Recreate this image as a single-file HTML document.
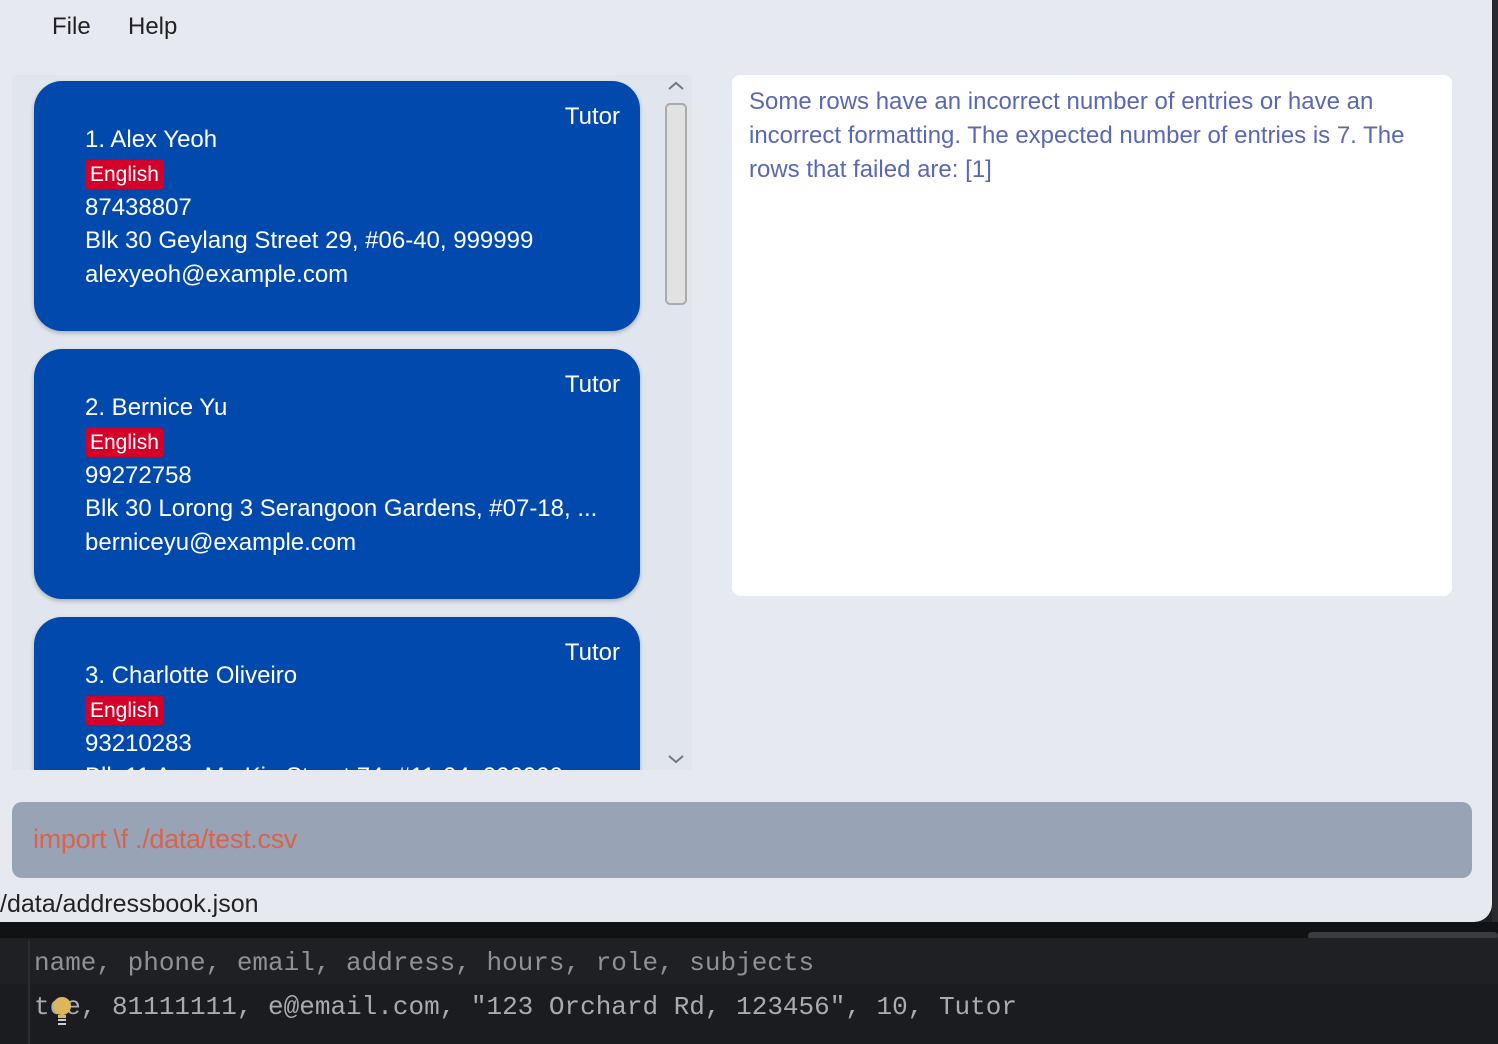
<!DOCTYPE html>
<html><head><style>
*{margin:0;padding:0;box-sizing:border-box}
body{width:1498px;height:1044px;overflow:hidden;background:#1e1f22;font-family:"Liberation Sans",sans-serif;position:relative}
.win{position:absolute;left:0;top:0;width:1492px;height:922px;background:#e6e9ef;border-bottom-right-radius:18px;overflow:hidden}
.edge{position:absolute;left:1492px;top:0;width:6px;height:922px;background:#2a2b2e}
.menu{position:absolute;top:13px;font-size:24px;color:#222}
.list{position:absolute;left:12px;top:75px;width:680px;height:695px;background:#e1e6ee;overflow:hidden}
.card{position:absolute;left:22px;width:606px;height:250px;background:#0149ad;border-radius:28px;color:#fff;font-size:24px;box-shadow:0 2px 4px rgba(0,0,0,.25)}
.card .role{position:absolute;right:20px;top:22px}
.card .body{position:absolute;left:51px;top:42px;line-height:33.5px}
.tag{display:inline-block;background:#d4002a;padding:0 5px;font-size:21px;line-height:29px;border-radius:3px;margin:2px 0}
.sb{position:absolute;left:665px;top:103px;width:22px;height:202px;border:2px solid #aaa;border-radius:5px;background:#e2e2e2}
.res{position:absolute;left:732px;top:75px;width:720px;height:521px;background:#fff;border-radius:8px;padding:10px 17px;font-size:24px;line-height:34px;color:#5a68b4}
.cmd{position:absolute;left:12px;top:802px;width:1460px;height:76px;background:#98a3b5;border-radius:10px;font-size:27px;color:#d9634d;padding:22px 21px;letter-spacing:-0.3px}
.stat{position:absolute;left:0;top:890px;font-size:25px;color:#222}
.code{position:absolute;left:0;font-family:"Liberation Mono",monospace;font-size:26px;color:#a9abb0;padding-left:34px;width:1498px}
</style></head><body>
<div class="win">
<div class="menu" style="left:52px">File</div>
<div class="menu" style="left:128px">Help</div>
<div class="list">
<div class="card" style="top:6px"><div class="role">Tutor</div><div class="body">1. Alex Yeoh<br><span class="tag">English</span><br>87438807<br>Blk 30 Geylang Street 29, #06-40, 999999<br>alexyeoh@example.com</div></div>
<div class="card" style="top:274px"><div class="role">Tutor</div><div class="body" style="top:42px">2. Bernice Yu<br><span class="tag">English</span><br>99272758<br>Blk 30 Lorong 3 Serangoon Gardens, #07-18, ...<br>berniceyu@example.com</div></div>
<div class="card" style="top:542px"><div class="role">Tutor</div><div class="body" style="top:42px">3. Charlotte Oliveiro<br><span class="tag">English</span><br>93210283<br>Blk 11 Ang Mo Kio Street 74, #11-04, 999999</div></div>
</div>
<svg style="position:absolute;left:667px;top:80px" width="18" height="12"><path d="M2 9L9 3L16 9" stroke="#777" stroke-width="2" fill="none"/></svg>
<svg style="position:absolute;left:667px;top:753px" width="18" height="12"><path d="M2 3L9 9L16 3" stroke="#777" stroke-width="2" fill="none"/></svg>
<div class="sb"></div>
<div class="res">Some rows have an incorrect number of entries or have an incorrect formatting. The expected number of entries is 7. The rows that failed are: [1]</div>
<div class="cmd">import \f ./data/test.csv</div>
<div class="stat">/data/addressbook.json</div>
</div>
<div class="edge"></div>
<div style="position:absolute;left:0;top:922px;width:1498px;height:16px;background:#111214"></div>
<div style="position:absolute;left:1308px;top:932px;width:190px;height:8px;background:#3a3b3e;border-radius:4px"></div>
<div style="position:absolute;left:0;top:938px;width:1498px;height:46px;background:#1f2023"></div>
<div style="position:absolute;left:0;top:984px;width:1498px;height:60px;background:#1b1c1f"></div>
<div style="position:absolute;left:28px;top:940px;width:2px;height:104px;background:#2c2d30"></div>
<div class="code" style="top:948px;color:#8f9196">name, phone, email, address, hours, role, subjects</div>
<div class="code" style="top:992px">tee, 81111111, e@email.com, "123 Orchard Rd, 123456", 10, Tutor</div>
<svg style="position:absolute;left:51px;top:996px" width="22" height="30"><circle cx="11" cy="10" r="9" fill="#ddb65b"/><rect x="7" y="19" width="8" height="3" fill="#ddb65b"/><rect x="7" y="23" width="8" height="2" fill="#ccc"/><rect x="7" y="27" width="8" height="2" fill="#ccc"/></svg>
</body></html>
